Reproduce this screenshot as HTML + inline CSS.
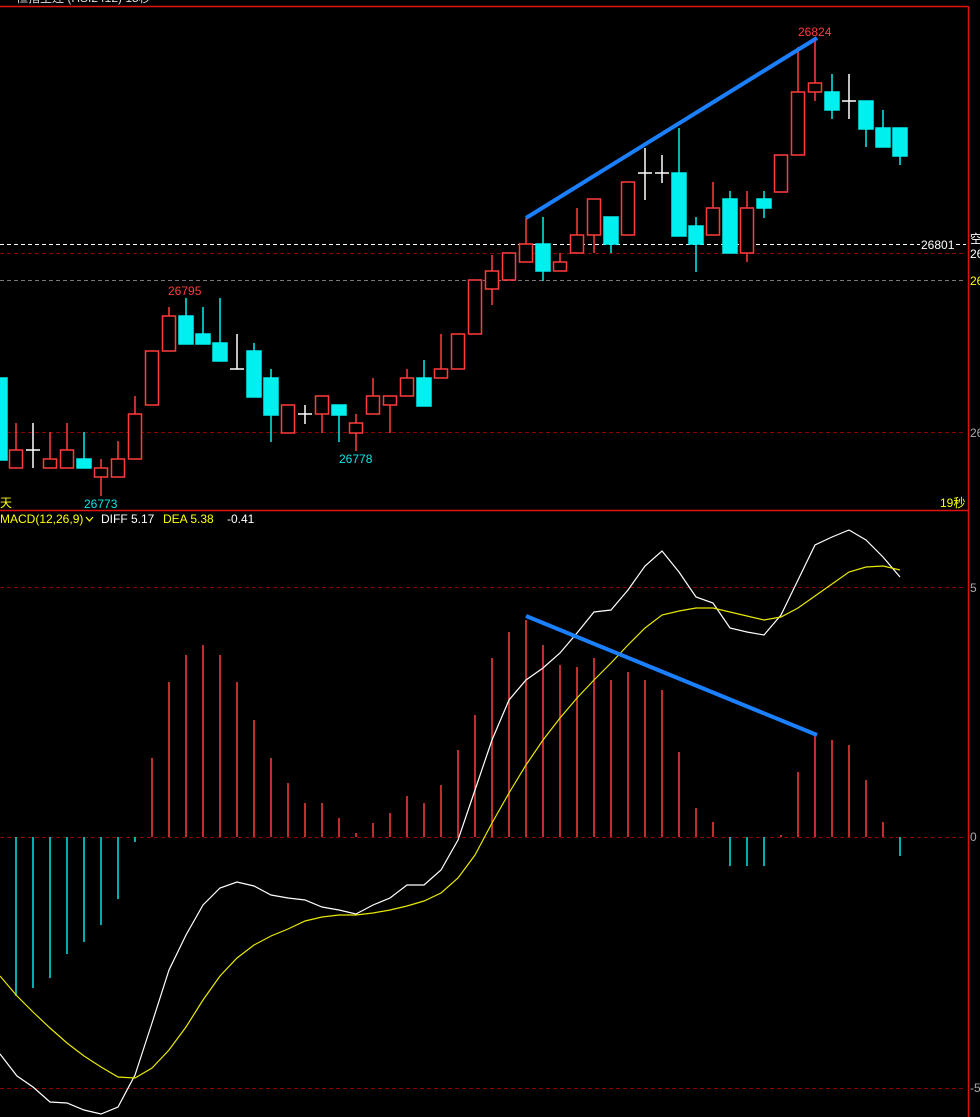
<!DOCTYPE html>
<html><head><meta charset="utf-8"><style>
html,body{margin:0;padding:0;background:#000;width:980px;height:1117px;overflow:hidden}
svg{display:block}
text{font-family:"Liberation Sans","Noto Sans CJK SC",sans-serif;font-size:12px}
</style></head><body>
<svg width="980" height="1117" viewBox="0 0 980 1117" xmlns="http://www.w3.org/2000/svg">
<rect width="980" height="1117" fill="#000"/>
<text x="16" y="2" fill="#ddd">恒指主连 (HSI2412) 15秒</text>
<!-- frame -->
<line x1="0" y1="6.5" x2="968" y2="6.5" stroke="#e01010" stroke-width="1.5"/>
<line x1="0" y1="510.5" x2="968" y2="510.5" stroke="#e01010" stroke-width="1.5"/>
<line x1="968.5" y1="6" x2="968.5" y2="1117" stroke="#e01010" stroke-width="1.5"/>
<!-- grid dashed -->
<g stroke-dasharray="4,3" stroke-width="1">
<line x1="0" y1="253.5" x2="966" y2="253.5" stroke="#8a0000"/>
<line x1="0" y1="280.5" x2="966" y2="280.5" stroke="#777"/>
<line x1="0" y1="432.5" x2="966" y2="432.5" stroke="#8a0000"/>
<line x1="0" y1="587.5" x2="966" y2="587.5" stroke="#8a0000"/>
<line x1="0" y1="837.5" x2="966" y2="837.5" stroke="#8a0000"/>
<line x1="0" y1="1088.5" x2="966" y2="1088.5" stroke="#8a0000"/>
<line x1="0" y1="244.5" x2="920" y2="244.5" stroke="#fff"/>
<line x1="956" y1="244.5" x2="966" y2="244.5" stroke="#fff"/>
</g>
<text x="921" y="249" fill="#fff">26801</text>
<text x="970" y="243" fill="#fff">空</text>
<text x="970" y="258" fill="#fff">26</text>
<text x="970" y="285" fill="#ff0">26</text>
<text x="970" y="437" fill="#aaa">26</text>
<text x="970" y="592" fill="#aaa">5</text>
<text x="970" y="841" fill="#aaa">0</text>
<text x="970" y="1092" fill="#aaa">-5</text>
<text x="940" y="507" fill="#ff0">19秒</text>
<text x="0" y="507" fill="#ff0">天</text>
<!-- candle labels -->
<text x="798" y="36" fill="#ff3c3c">26824</text>
<text x="168" y="295" fill="#ff3c3c">26795</text>
<text x="339" y="463" fill="#00e8e8">26778</text>
<text x="84" y="508" fill="#00e8e8">26773</text>
<!-- MACD header -->
<text x="0" y="523" fill="#ff0">MACD(12,26,9)</text>
<path d="M86 517 l3.5 4 l3.5 -4" stroke="#ff0" fill="none" stroke-width="1.2"/>
<text x="101" y="523" fill="#fff">DIFF 5.17</text>
<text x="163" y="523" fill="#ff0">DEA 5.38</text>
<text x="227" y="523" fill="#fff">-0.41</text>
<!-- candles -->
<g stroke-width="1.5">
<g stroke="#ff3c3c" fill="#000">
<line x1="16" y1="423" x2="16" y2="450"/><rect x="9.5" y="450" width="13" height="18"/>
<line x1="50" y1="432" x2="50" y2="459"/><rect x="43.5" y="459" width="13" height="9"/>
<line x1="67" y1="423" x2="67" y2="450"/><rect x="60.5" y="450" width="13" height="18"/>
<line x1="101" y1="459" x2="101" y2="496"/><rect x="94.5" y="468" width="13" height="9"/>
<line x1="118" y1="441" x2="118" y2="459"/><rect x="111.5" y="459" width="13" height="18"/>
<line x1="135" y1="396" x2="135" y2="414"/><rect x="128.5" y="414" width="13" height="45"/>
<rect x="145.5" y="351" width="13" height="54"/>
<line x1="169" y1="307" x2="169" y2="316"/><rect x="162.5" y="316" width="13" height="35"/>
<rect x="281.5" y="405" width="13" height="28"/>
<line x1="322" y1="414" x2="322" y2="433"/><rect x="315.5" y="396" width="13" height="18"/>
<line x1="356" y1="414" x2="356" y2="451"/><rect x="349.5" y="423" width="13" height="10"/>
<line x1="373" y1="378" x2="373" y2="396"/><rect x="366.5" y="396" width="13" height="18"/>
<line x1="390" y1="405" x2="390" y2="433"/><rect x="383.5" y="396" width="13" height="9"/>
<line x1="407" y1="369" x2="407" y2="378"/><rect x="400.5" y="378" width="13" height="18"/>
<line x1="441" y1="334" x2="441" y2="369"/><rect x="434.5" y="369" width="13" height="9"/>
<rect x="451.5" y="334" width="13" height="35"/>
<rect x="468.5" y="280" width="13" height="54"/>
<line x1="492" y1="255" x2="492" y2="305"/><rect x="485.5" y="271" width="13" height="18"/>
<rect x="502.5" y="253" width="13" height="27"/>
<line x1="526" y1="218" x2="526" y2="244"/><rect x="519.5" y="244" width="13" height="18"/>
<line x1="560" y1="253" x2="560" y2="262"/><rect x="553.5" y="262" width="13" height="9"/>
<line x1="577" y1="208" x2="577" y2="253"/><rect x="570.5" y="235" width="13" height="18"/>
<line x1="594" y1="235" x2="594" y2="253"/><rect x="587.5" y="199" width="13" height="36"/>
<rect x="621.5" y="182" width="13" height="53"/>
<line x1="713" y1="182" x2="713" y2="208"/><rect x="706.5" y="208" width="13" height="27"/>
<line x1="747" y1="191" x2="747" y2="262"/><rect x="740.5" y="208" width="13" height="45"/>
<rect x="774.5" y="155" width="13" height="37"/>
<line x1="798" y1="47" x2="798" y2="92"/><rect x="791.5" y="92" width="13" height="63"/>
<line x1="815" y1="38" x2="815" y2="101"/><rect x="808.5" y="83" width="13" height="9"/>
</g>
<g stroke="#00f0f0" fill="#00f0f0">
<rect x="-8" y="378" width="15" height="82"/>
<line x1="84" y1="432" x2="84" y2="459"/><rect x="77" y="459" width="14" height="9"/>
<line x1="186" y1="298" x2="186" y2="316"/><rect x="179" y="316" width="14" height="28"/>
<line x1="203" y1="307" x2="203" y2="334"/><rect x="196" y="334" width="14" height="10"/>
<line x1="220" y1="298" x2="220" y2="343"/><rect x="213" y="343" width="14" height="18"/>
<line x1="254" y1="343" x2="254" y2="351"/><rect x="247" y="351" width="14" height="46"/>
<line x1="271" y1="369" x2="271" y2="442"/><rect x="264" y="378" width="14" height="37"/>
<line x1="339" y1="405" x2="339" y2="442"/><rect x="332" y="405" width="14" height="10"/>
<line x1="424" y1="360" x2="424" y2="378"/><rect x="417" y="378" width="14" height="28"/>
<line x1="543" y1="217" x2="543" y2="281"/><rect x="536" y="244" width="14" height="27"/>
<line x1="611" y1="244" x2="611" y2="253"/><rect x="604" y="217" width="14" height="27"/>
<line x1="679" y1="128" x2="679" y2="173"/><rect x="672" y="173" width="14" height="63"/>
<line x1="696" y1="217" x2="696" y2="272"/><rect x="689" y="226" width="14" height="18"/>
<line x1="730" y1="191" x2="730" y2="199"/><rect x="723" y="199" width="14" height="54"/>
<line x1="764" y1="191" x2="764" y2="218"/><rect x="757" y="199" width="14" height="9"/>
<line x1="832" y1="74" x2="832" y2="119"/><rect x="825" y="92" width="14" height="18"/>
<line x1="866" y1="101" x2="866" y2="147"/><rect x="859" y="101" width="14" height="28"/>
<line x1="883" y1="110" x2="883" y2="128"/><rect x="876" y="128" width="14" height="19"/>
<line x1="900" y1="128" x2="900" y2="165"/><rect x="893" y="128" width="14" height="28"/>
</g>
<g stroke="#fff">
<line x1="33" y1="423" x2="33" y2="468"/><line x1="26" y1="450" x2="40" y2="450"/>
<line x1="237" y1="334" x2="237" y2="369"/><line x1="230" y1="369" x2="244" y2="369"/>
<line x1="305" y1="405" x2="305" y2="424"/><line x1="298" y1="414" x2="312" y2="414"/>
<line x1="645" y1="148" x2="645" y2="200"/><line x1="638" y1="173" x2="652" y2="173"/>
<line x1="662" y1="155" x2="662" y2="183"/><line x1="655" y1="173" x2="669" y2="173"/>
<line x1="849" y1="74" x2="849" y2="119"/><line x1="842" y1="101" x2="856" y2="101"/>
</g>
</g>
<!-- MACD bars -->
<g stroke-width="1.5">
<g stroke="#00e8e8">
<line x1="16" y1="837" x2="16" y2="996"/><line x1="33" y1="837" x2="33" y2="988"/>
<line x1="50" y1="837" x2="50" y2="978"/><line x1="67" y1="837" x2="67" y2="954"/>
<line x1="84" y1="837" x2="84" y2="942"/><line x1="101" y1="837" x2="101" y2="925"/>
<line x1="118" y1="837" x2="118" y2="899"/><line x1="135" y1="837" x2="135" y2="842"/>
<line x1="730" y1="837" x2="730" y2="866"/><line x1="747" y1="837" x2="747" y2="866"/>
<line x1="764" y1="837" x2="764" y2="866"/><line x1="900" y1="837" x2="900" y2="856"/>
</g>
<g stroke="#ff3c3c">
<line x1="152" y1="837" x2="152" y2="758"/><line x1="169" y1="837" x2="169" y2="682"/>
<line x1="186" y1="837" x2="186" y2="655"/><line x1="203" y1="837" x2="203" y2="645"/>
<line x1="220" y1="837" x2="220" y2="655"/><line x1="237" y1="837" x2="237" y2="682"/>
<line x1="254" y1="837" x2="254" y2="720"/><line x1="271" y1="837" x2="271" y2="758"/>
<line x1="288" y1="837" x2="288" y2="783"/><line x1="305" y1="837" x2="305" y2="803"/>
<line x1="322" y1="837" x2="322" y2="803"/><line x1="339" y1="837" x2="339" y2="818"/>
<line x1="356" y1="837" x2="356" y2="833"/><line x1="373" y1="837" x2="373" y2="823"/>
<line x1="390" y1="837" x2="390" y2="813"/><line x1="407" y1="837" x2="407" y2="796"/>
<line x1="424" y1="837" x2="424" y2="803"/><line x1="441" y1="837" x2="441" y2="785"/>
<line x1="458" y1="837" x2="458" y2="750"/><line x1="475" y1="837" x2="475" y2="715"/>
<line x1="492" y1="837" x2="492" y2="658"/><line x1="509" y1="837" x2="509" y2="632"/>
<line x1="526" y1="837" x2="526" y2="620"/><line x1="543" y1="837" x2="543" y2="645"/>
<line x1="560" y1="837" x2="560" y2="665"/><line x1="577" y1="837" x2="577" y2="667"/>
<line x1="594" y1="837" x2="594" y2="658"/><line x1="611" y1="837" x2="611" y2="680"/>
<line x1="628" y1="837" x2="628" y2="672"/><line x1="645" y1="837" x2="645" y2="680"/>
<line x1="662" y1="837" x2="662" y2="690"/><line x1="679" y1="837" x2="679" y2="752"/>
<line x1="696" y1="837" x2="696" y2="808"/><line x1="713" y1="837" x2="713" y2="822"/>
<line x1="781" y1="837" x2="781" y2="835"/><line x1="798" y1="837" x2="798" y2="772"/>
<line x1="815" y1="837" x2="815" y2="735"/><line x1="832" y1="837" x2="832" y2="740"/>
<line x1="849" y1="837" x2="849" y2="745"/><line x1="866" y1="837" x2="866" y2="780"/>
<line x1="883" y1="837" x2="883" y2="822"/>
</g>
</g>
<!-- DIFF / DEA -->
<polyline fill="none" stroke="#fff" stroke-width="1.2" points="0,1054 17,1076 33,1087 50,1102 67,1103 84,1110 101,1114 118,1107 135,1075 152,1023 169,970 186,935 203,905 220,888 237,882 254,886 271,895 288,898 305,900 322,907 339,910 356,914 373,905 390,898 407,885 424,885 441,870 458,840 475,790 492,740 509,700 526,680 543,668 560,653 577,633 594,612 611,610 628,590 645,566 662,551 679,572 696,597 713,603 730,628 747,632 764,635 781,615 798,580 815,545 832,537 849,530 866,540 883,557 900,577"/>
<polyline fill="none" stroke="#e8e800" stroke-width="1.2" points="0,976 17,996 33,1012 50,1028 67,1043 84,1056 101,1067 118,1077 135,1078 152,1068 169,1050 186,1027 203,1000 220,976 237,958 254,945 271,936 288,929 305,921 322,917 339,915 356,915 373,913 390,910 407,906 424,901 441,893 458,878 475,855 492,823 509,793 526,765 543,740 560,718 577,698 594,680 611,663 628,645 645,628 662,615 679,611 696,608 713,608 730,612 747,616 764,620 781,617 798,608 815,596 832,584 849,572 866,567 883,566 900,570"/>
<!-- trend lines -->
<line x1="526" y1="218" x2="817" y2="38" stroke="#1a80ff" stroke-width="4"/>
<line x1="526" y1="616" x2="817" y2="735" stroke="#1a80ff" stroke-width="4"/>
</svg>
</body></html>
